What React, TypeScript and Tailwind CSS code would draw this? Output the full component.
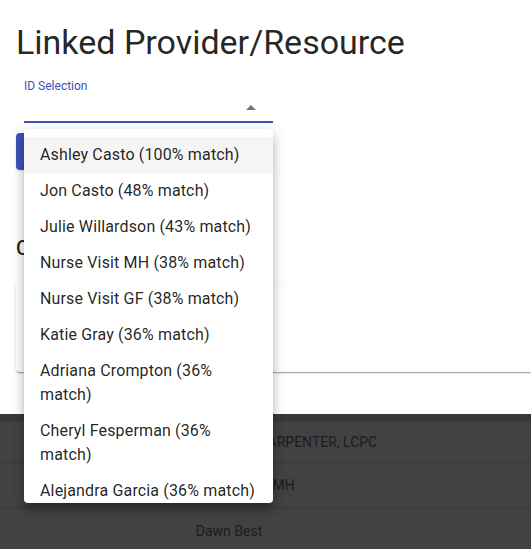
import React from 'react';

const matches = [
  'Ashley Casto (100% match)',
  'Jon Casto (48% match)',
  'Julie Willardson (43% match)',
  'Nurse Visit MH (38% match)',
  'Nurse Visit GF (38% match)',
  'Katie Gray (36% match)',
  'Adriana Crompton (36% match)',
  'Cheryl Fesperman (36% match)',
  'Alejandra Garcia (36% match)',
  'Amber Smith (35% match)',
];

const rows = [
  { name: 'Licensed Counselor Jessica CARPENTER, LCPC', h: 'h-[41px]' },
  { name: 'Nurse Visit Clinic MH', h: 'h-[45px]' },
  { name: 'Dawn Best', h: 'h-[46px]' },
];

export default function App() {
  return (
    <div className="relative w-full h-[549px] overflow-hidden bg-white font-['Roboto','Liberation_Sans',sans-serif] text-black/87">
      {/* Dialog body */}
      <div className="h-[414px] px-4 pt-[21px]">
        <h1 className="text-[34px] leading-[42px] text-black/87">Linked Provider/Resource</h1>

        {/* ID selection field */}
        <div className="ml-2 mt-[16px] w-[249px]">
          <label className="block text-[12px] leading-[14px] text-[#3f51b5]">ID Selection</label>
          <div className="flex h-[30px] items-center justify-end border-b-2 border-[#3f51b5] pr-[10px]">
            <ArrowUp />
          </div>
        </div>

        <button className="mt-[10px] h-[37px] w-[160px] rounded bg-[#3f51b5] text-sm font-medium uppercase text-white shadow">
          Link
        </button>

        <h2 className="mt-[62px] text-[20px] leading-[32px] font-medium text-black/87">Current Links</h2>

        <div className="-mr-4 mt-[18px] h-[90px] rounded-l bg-white shadow-[0_2px_1px_-1px_rgba(0,0,0,0.2),0_1px_1px_0_rgba(0,0,0,0.14),0_1px_3px_0_rgba(0,0,0,0.12)]" />
      </div>

      {/* Dimmed table behind dialog */}
      <div className="bg-[#424242]">
        <div className="h-[8px] border-b border-[#393939] bg-[#383838]" />
        {rows.map((r) => (
          <div key={r.name} className={`${r.h} flex items-center border-b border-[#393939]`}>
            <div className="w-[458px] text-center text-sm text-[#1c1c1c]">{r.name}</div>
          </div>
        ))}
      </div>

      {/* Open select menu */}
      <div className="absolute left-[24px] top-[129px] h-[374px] w-[249px] overflow-hidden rounded bg-white py-2 shadow-[0_5px_5px_-3px_rgba(0,0,0,0.2),0_8px_10px_1px_rgba(0,0,0,0.14),0_3px_14px_2px_rgba(0,0,0,0.12)]">
        <ul>
          {matches.map((m, i) => (
            <li
              key={m}
              className={`px-4 py-[6px] text-base leading-6 tracking-[0.15px] text-black/87 ${i === 0 ? 'bg-[#f5f5f5]' : ''}`}
            >
              {m}
            </li>
          ))}
        </ul>
      </div>
    </div>
  );
}

function ArrowUp() {
  return (
    <svg className="h-6 w-6 -mb-[2px]" viewBox="0 0 24 24" fill="rgba(0,0,0,0.54)">
      <path d="M7 14l5-5 5 5z" />
    </svg>
  );
}
